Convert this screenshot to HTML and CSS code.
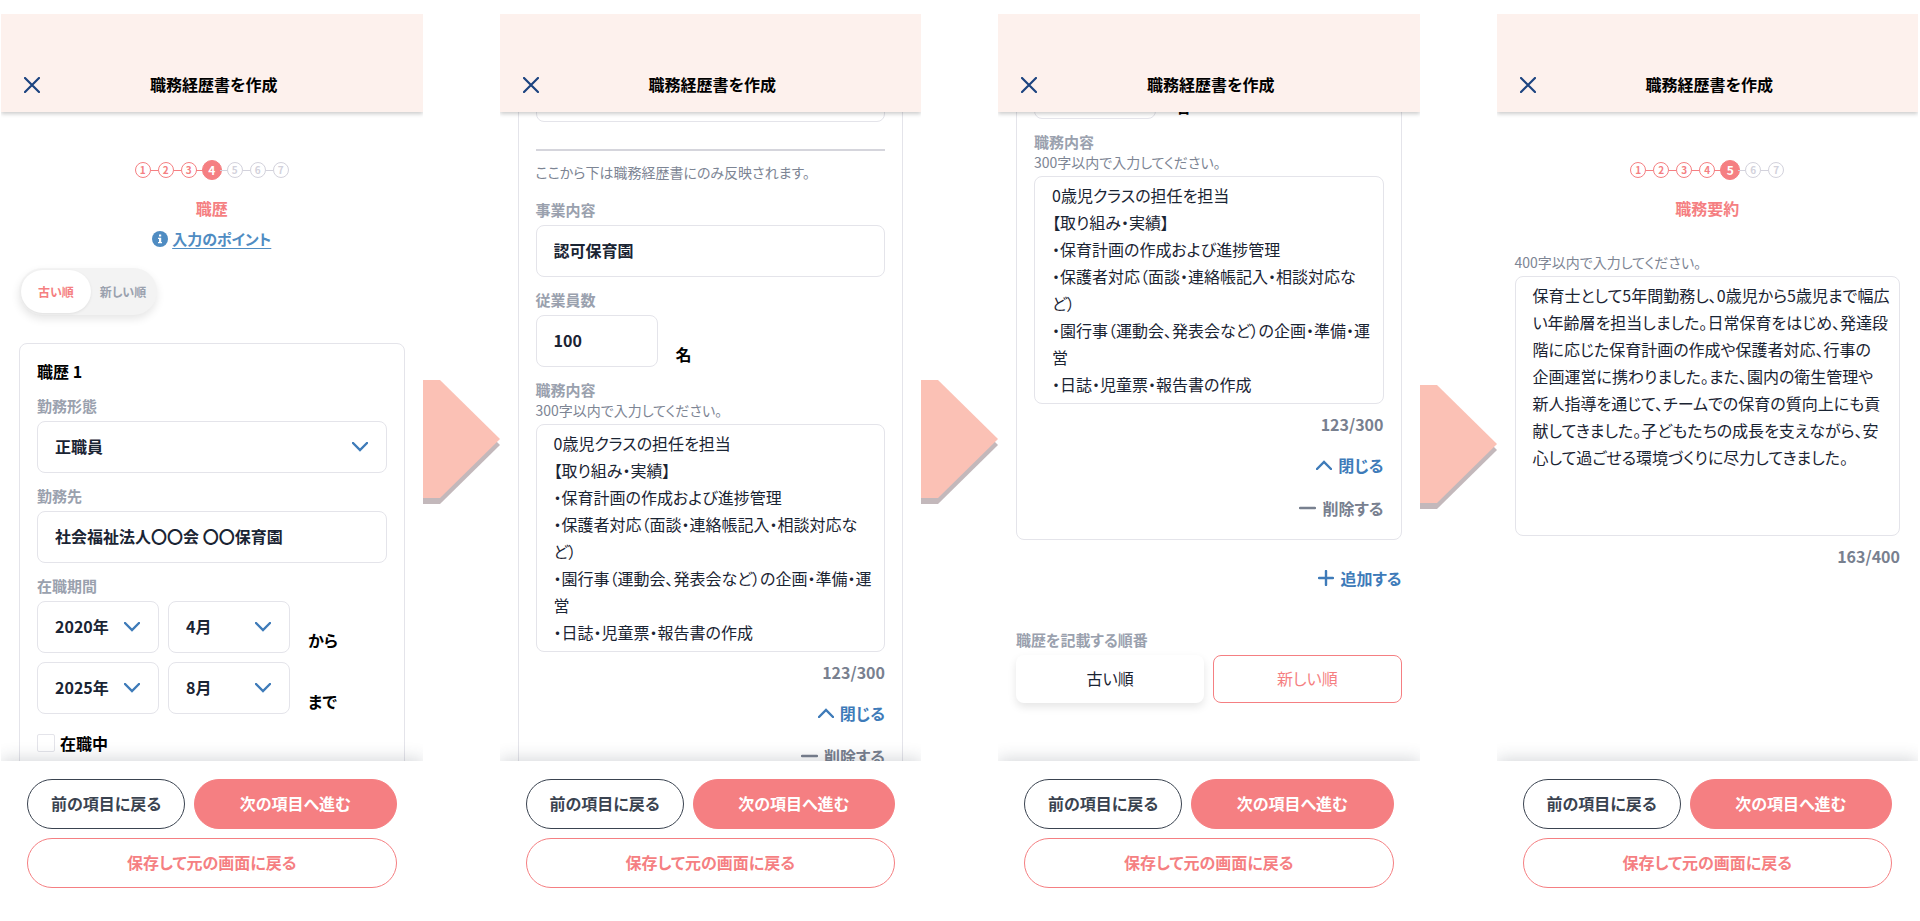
FILE: index.html
```html
<!DOCTYPE html>
<html lang="ja">
<head>
    <meta charset="UTF-8">
    <meta name="viewport" content="width=device-width, initial-scale=1.0">
    <title>職務経歴書を作成</title>
    <link rel="stylesheet" href="styles.css">
</head>
<body>
    <!-- 職歴(上部) -->
    <section class="screen">
        <header class="screen-header">
            <button class="close-btn" aria-label="閉じる">
                <svg width="16" height="16" viewBox="0 0 16 16"><path d="M1 1L15 15M15 1L1 15"/></svg>
            </button>
            <h1>職務経歴書を作成</h1>
        </header>
        <main class="content">
            <ol class="steps">
                <li class="done">1</li>
                <li class="done">2</li>
                <li class="done">3</li>
                <li class="current">4</li>
                <li>5</li>
                <li>6</li>
                <li>7</li>
            </ol>
            <h2 class="step-title">職歴</h2>
            <p class="hint-link">
                <svg width="16" height="16" viewBox="0 0 16 16">
                    <circle cx="8" cy="8" r="8" fill="#4f8cc2"/>
                    <path d="M7 3.4h2.2v2.1H7zM6 6.7h3.2v4.2H10v1.4H6v-1.4h1V8.1H6z" fill="#fff"/>
                </svg>
                <a href="#">入力のポイント</a>
            </p>
            <div class="toggle">
                <button class="active">古い順</button>
                <button>新しい順</button>
            </div>
            <div class="card">
                <h3>職歴 1</h3>
                <label for="work-style">勤務形態</label>
                <div class="select-box">
                    <select id="work-style"><option>正職員</option></select>
                    <svg width="16" height="10" viewBox="0 0 16 10"><path d="M1 1L8 8L15 1"/></svg>
                </div>
                <label for="company">勤務先</label>
                <input type="text" id="company" value="社会福祉法人〇〇会 〇〇保育園">
                <label for="from-year">在職期間</label>
                <div class="row">
                    <div class="select-box short">
                        <select id="from-year"><option>2020年</option></select>
                        <svg width="16" height="10" viewBox="0 0 16 10"><path d="M1 1L8 8L15 1"/></svg>
                    </div>
                    <div class="select-box short">
                        <select aria-label="開始月"><option>4月</option></select>
                        <svg width="16" height="10" viewBox="0 0 16 10"><path d="M1 1L8 8L15 1"/></svg>
                    </div>
                    <span class="unit">から</span>
                </div>
                <div class="row">
                    <div class="select-box short">
                        <select aria-label="終了年"><option>2025年</option></select>
                        <svg width="16" height="10" viewBox="0 0 16 10"><path d="M1 1L8 8L15 1"/></svg>
                    </div>
                    <div class="select-box short">
                        <select aria-label="終了月"><option>8月</option></select>
                        <svg width="16" height="10" viewBox="0 0 16 10"><path d="M1 1L8 8L15 1"/></svg>
                    </div>
                    <span class="unit">まで</span>
                </div>
                <div class="check">
                    <input type="checkbox" id="employed">
                    <label for="employed">在職中</label>
                </div>
            </div>
        </main>
        <footer class="screen-footer">
            <button class="btn btn-back">前の項目に戻る</button>
            <button class="btn btn-next">次の項目へ進む</button>
            <button class="btn btn-save">保存して元の画面に戻る</button>
        </footer>
    </section>

    <div class="arrow">
        <svg width="77" height="124" viewBox="0 0 77 124">
            <path d="M0 5H17L77 65L17 124H0z" fill="#c3b8bb"/>
            <path d="M0 0H17L77 59L17 118H0z" fill="#fbc1b5"/>
        </svg>
    </div>

    <!-- 職歴(中部) -->
    <section class="screen">
        <header class="screen-header">
            <button class="close-btn" aria-label="閉じる">
                <svg width="16" height="16" viewBox="0 0 16 16"><path d="M1 1L15 15M15 1L1 15"/></svg>
            </button>
            <h1>職務経歴書を作成</h1>
        </header>
        <main class="content">
            <div class="card scrolled">
                <input type="text" aria-label="勤務先">
                <hr>
                <p class="note">ここから下は職務経歴書にのみ反映されます。</p>
                <label for="business">事業内容</label>
                <input type="text" id="business" value="認可保育園">
                <label for="staff">従業員数</label>
                <div class="row">
                    <input type="text" id="staff" class="short" value="100">
                    <span class="unit">名</span>
                </div>
                <label for="duties" class="with-hint">職務内容</label>
                <p class="hint">300字以内で入力してください。</p>
                <textarea id="duties" rows="8">0歳児クラスの担任を担当
【取り組み・実績】
・保育計画の作成および進捗管理
・保護者対応（面談・連絡帳記入・相談対応など）
・園行事（運動会、発表会など）の企画・準備・運営
・日誌・児童票・報告書の作成</textarea>
                <p class="counter">123/300</p>
                <button class="text-btn">
                    <svg width="16" height="10" viewBox="0 0 16 10"><path d="M1 9L8 2L15 9"/></svg>
                    閉じる
                </button>
                <button class="text-btn gray">
                    <svg width="17" height="16" viewBox="0 0 17 16"><path d="M1 8H16"/></svg>
                    削除する
                </button>
            </div>
        </main>
        <footer class="screen-footer">
            <button class="btn btn-back">前の項目に戻る</button>
            <button class="btn btn-next">次の項目へ進む</button>
            <button class="btn btn-save">保存して元の画面に戻る</button>
        </footer>
    </section>

    <div class="arrow">
        <svg width="77" height="124" viewBox="0 0 77 124">
            <path d="M0 5H17L77 65L17 124H0z" fill="#c3b8bb"/>
            <path d="M0 0H17L77 59L17 118H0z" fill="#fbc1b5"/>
        </svg>
    </div>

    <!-- 職歴(下部) -->
    <section class="screen">
        <header class="screen-header">
            <button class="close-btn" aria-label="閉じる">
                <svg width="16" height="16" viewBox="0 0 16 16"><path d="M1 1L15 15M15 1L1 15"/></svg>
            </button>
            <h1>職務経歴書を作成</h1>
        </header>
        <main class="content">
            <div class="card scrolled-end">
                <div class="row">
                    <input type="text" class="short" aria-label="従業員数">
                    <span class="unit">名</span>
                </div>
                <label for="duties2" class="with-hint">職務内容</label>
                <p class="hint">300字以内で入力してください。</p>
                <textarea id="duties2" rows="8">0歳児クラスの担任を担当
【取り組み・実績】
・保育計画の作成および進捗管理
・保護者対応（面談・連絡帳記入・相談対応など）
・園行事（運動会、発表会など）の企画・準備・運営
・日誌・児童票・報告書の作成</textarea>
                <p class="counter">123/300</p>
                <button class="text-btn">
                    <svg width="16" height="10" viewBox="0 0 16 10"><path d="M1 9L8 2L15 9"/></svg>
                    閉じる
                </button>
                <button class="text-btn gray">
                    <svg width="17" height="16" viewBox="0 0 17 16"><path d="M1 8H16"/></svg>
                    削除する
                </button>
            </div>
            <button class="text-btn add-btn">
                <svg width="16" height="16" viewBox="0 0 16 16"><path d="M1 8H15M8 1V15"/></svg>
                追加する
            </button>
            <p class="order-label">職歴を記載する順番</p>
            <div class="order">
                <button class="order-btn">古い順</button>
                <button class="order-btn selected">新しい順</button>
            </div>
        </main>
        <footer class="screen-footer">
            <button class="btn btn-back">前の項目に戻る</button>
            <button class="btn btn-next">次の項目へ進む</button>
            <button class="btn btn-save">保存して元の画面に戻る</button>
        </footer>
    </section>

    <div class="arrow arrow-low">
        <svg width="77" height="124" viewBox="0 0 77 124">
            <path d="M0 5H17L77 65L17 124H0z" fill="#c3b8bb"/>
            <path d="M0 0H17L77 59L17 118H0z" fill="#fbc1b5"/>
        </svg>
    </div>

    <!-- 職務要約 -->
    <section class="screen">
        <header class="screen-header">
            <button class="close-btn" aria-label="閉じる">
                <svg width="16" height="16" viewBox="0 0 16 16"><path d="M1 1L15 15M15 1L1 15"/></svg>
            </button>
            <h1>職務経歴書を作成</h1>
        </header>
        <main class="content">
            <ol class="steps">
                <li class="done">1</li>
                <li class="done">2</li>
                <li class="done">3</li>
                <li class="done">4</li>
                <li class="current">5</li>
                <li>6</li>
                <li>7</li>
            </ol>
            <h2 class="step-title">職務要約</h2>
            <label for="summary" class="hint summary-hint">400字以内で入力してください。</label>
            <textarea id="summary" class="summary">保育士として5年間勤務し、0歳児から5歳児まで幅広
い年齢層を担当しました。日常保育をはじめ、発達段
階に応じた保育計画の作成や保護者対応、行事の
企画運営に携わりました。また、園内の衛生管理や
新人指導を通じて、チームでの保育の質向上にも貢
献してきました。子どもたちの成長を支えながら、安
心して過ごせる環境づくりに尽力してきました。</textarea>
            <p class="counter">163/400</p>
        </main>
        <footer class="screen-footer">
            <button class="btn btn-back">前の項目に戻る</button>
            <button class="btn btn-next">次の項目へ進む</button>
            <button class="btn btn-save">保存して元の画面に戻る</button>
        </footer>
    </section>
</body>
</html>
```
FILE: styles.css
```css
* {
    box-sizing: border-box;
}
body {
    font-family: "Noto Sans CJK JP", sans-serif;
    font-feature-settings: "palt";
    font-size: 16px;
    line-height: 24px;
    margin: 0;
    padding: 14px 2px 15px 1px;
    height: 100vh;
    display: flex;
    background-color: #fff;
    color: #000;
}
h1, h2, h3, p, ol {
    margin: 0;
    padding: 0;
    font-size: 16px;
    font-weight: bold;
}
button, input, select, textarea {
    font-family: inherit;
    font-feature-settings: inherit;
    font-size: 16px;
    color: #1a2433;
}
button {
    background: none;
    border: none;
    padding: 0;
    cursor: pointer;
}
svg {
    display: block;
    flex-shrink: 0;
}
.screen {
    flex: 1 1 0;
    min-width: 0;
    display: flex;
    flex-direction: column;
    overflow: hidden;
    background-color: #fff;
}

/* ヘッダー */
.screen-header {
    position: relative;
    z-index: 1;
    display: grid;
    grid-template-columns: 48px 1fr 44px;
    align-items: center;
    height: 98px;
    flex-shrink: 0;
    padding: 44px 0 0;
    background-color: #fdf1ed;
    box-shadow: 0 2px 4px rgba(0, 0, 0, 0.2);
}
.screen-header h1 {
    padding-bottom: 2px;
    text-align: center;
}
.close-btn {
    padding-left: 23px;
}
.close-btn path {
    fill: none;
    stroke: #1c4480;
    stroke-width: 2.2;
    stroke-linecap: round;
}

/* 本文 */
.content {
    flex: 1;
    min-height: 0;
    overflow: hidden;
    padding: 0 18px;
    display: flex;
    flex-direction: column;
}
.content > * {
    flex-shrink: 0;
}
.steps {
    display: flex;
    justify-content: center;
    align-items: center;
    list-style: none;
    margin-top: 48px;
    height: 20px;
}
.steps li {
    position: relative;
    width: 16px;
    height: 16px;
    border: 1px solid #d3d2dc;
    border-radius: 50%;
    font-size: 10px;
    font-weight: bold;
    line-height: 14px;
    text-align: center;
    color: #d3d2dc;
    margin-right: 7px;
}
.steps li:last-child {
    margin-right: 0;
}
.steps li:not(:first-child)::before {
    content: "";
    position: absolute;
    right: 15px;
    top: 7px;
    width: 7px;
    height: 1px;
    background-color: #d3d2dc;
}
.steps .done {
    border-color: #f57f82;
    color: #f57f82;
}
.steps .current {
    width: 20px;
    height: 20px;
    margin: 0 5px 0 -2px;
    border-color: #f57f82;
    background-color: #f57f82;
    color: #fff;
    font-size: 12px;
    line-height: 18px;
}
.steps .done:not(:first-child)::before,
.steps li.current::before {
    background-color: #f57f82;
}
.steps li.current::before {
    right: 18px;
    top: 9px;
}
.step-title {
    margin-top: 16px;
    text-align: center;
    color: #f57f82;
}
.hint-link {
    display: flex;
    justify-content: center;
    align-items: center;
    gap: 4px;
    margin-top: 7px;
    font-size: 15px;
}
.hint-link a {
    color: #4f8cc2;
    text-underline-offset: 3px;
}
.toggle {
    align-self: flex-start;
    display: flex;
    margin-top: 17px;
    height: 47px;
    padding: 2px;
    border-radius: 24px;
    background-color: #f3f3f3;
    box-shadow: 0 4px 8px rgba(0, 0, 0, 0.1);
}
.toggle button {
    padding: 0 9px;
    border-radius: 22px;
    font-size: 12px;
    font-weight: bold;
    color: #9aa1ae;
}
.toggle .active {
    padding: 0 17px;
    background-color: #fff;
    color: #f57f82;
    box-shadow: 0 1px 3px rgba(0, 0, 0, 0.08);
}
.card {
    display: flex;
    flex-direction: column;
    margin-top: 28px;
    padding: 15px 17px 17px;
    border: 1px solid #e4e4ea;
    border-radius: 8px;
}
.card.scrolled {
    margin-top: -58px;
}
.card.scrolled-end {
    margin-top: -61px;
    padding-bottom: 19px;
}
label, .order-label {
    margin: 13px 0 5px;
    font-size: 15px;
    font-weight: bold;
    line-height: 20px;
    color: #9aa1ae;
}
.with-hint {
    margin-bottom: 0;
}
.hint, .note {
    font-size: 14px;
    font-weight: normal;
    line-height: 20px;
    color: #7d8594;
}
.hint {
    margin: 0 0 4px;
}
.note {
    margin: 11px 0 5px;
}
.summary-hint {
    margin-top: 32px;
}
hr {
    width: 100%;
    margin: 27px 0 0;
    border: none;
    border-top: 2px solid #d5d5dc;
}
input[type="text"], select {
    width: 100%;
    height: 52px;
    padding: 0 17px 2px;
    border: 1px solid #e4e4ea;
    border-radius: 8px;
    background-color: #fff;
    font-weight: bold;
}
select {
    appearance: none;
}
.select-box {
    position: relative;
}
.select-box svg {
    position: absolute;
    right: 19px;
    top: 21px;
    pointer-events: none;
}
.select-box path {
    fill: none;
    stroke: #3e7bb9;
    stroke-width: 2.4;
    stroke-linecap: round;
}
.row {
    display: flex;
    gap: 9px;
}
.row + .row {
    margin-top: 9px;
}
.short, input.short {
    width: 122px;
}
.unit {
    align-self: flex-end;
    margin-left: 9px;
    padding-bottom: 1px;
    font-weight: bold;
}
.check {
    display: flex;
    align-items: center;
    gap: 5px;
    margin-top: 17px;
}
.check input {
    appearance: none;
    width: 18px;
    height: 18px;
    margin: 0;
    border: 1px solid #e4e4ea;
    border-radius: 2px;
}
.check label {
    margin: 0;
    font-size: 16px;
    line-height: 24px;
    color: #000;
}
textarea {
    display: block;
    width: 100%;
    height: 228px;
    padding: 5px 11px 5px 17px;
    border: 1px solid #e4e4ea;
    border-radius: 8px;
    background-color: #fff;
    line-height: 27px;
    resize: none;
    overflow: hidden;
}
.summary {
    height: 260px;
    padding-right: 4px;
}
.counter {
    margin-top: 8px;
    text-align: right;
    color: #78808f;
}
.text-btn {
    align-self: flex-end;
    display: flex;
    align-items: center;
    gap: 6px;
    margin-top: 17px;
    font-weight: bold;
    line-height: 24px;
    color: #3e7bb9;
}
.text-btn path {
    fill: none;
    stroke: currentColor;
    stroke-width: 2.4;
    stroke-linecap: round;
}
.text-btn.gray {
    margin-top: 19px;
    color: #78808f;
}
.add-btn {
    margin-top: 26px;
}
.order-label {
    margin-top: 40px;
}
.order {
    display: grid;
    grid-template-columns: 1fr 1fr;
    gap: 9px;
}
.order-btn {
    height: 48px;
    padding-bottom: 2px;
    border-radius: 8px;
    box-shadow: 0 4px 8px rgba(0, 0, 0, 0.1);
}
.order-btn.selected {
    border: 1px solid #f57f82;
    color: #f57f82;
    box-shadow: none;
}

/* フッター */
.screen-footer {
    position: relative;
    z-index: 1;
    display: grid;
    grid-template-columns: 158fr 202fr;
    gap: 9px;
    padding: 18px 26px;
    background-color: #fff;
    box-shadow: 0 -2px 16px rgba(45, 55, 72, 0.2);
}
.btn {
    height: 50px;
    padding-bottom: 3px;
    border: 1px solid #f57f82;
    border-radius: 25px;
    font-weight: bold;
    color: #f57f82;
}
.btn-back {
    border-color: #3a4350;
    color: #3a4350;
}
.btn-next {
    background-color: #f57f82;
    color: #fff;
}
.btn-save {
    grid-column: 1 / 3;
}

/* 画面間の矢印 */
.arrow {
    width: 77px;
    flex-shrink: 0;
    display: flex;
    align-items: center;
    padding-bottom: 36px;
}
.arrow-low {
    padding-bottom: 26px;
}
```
